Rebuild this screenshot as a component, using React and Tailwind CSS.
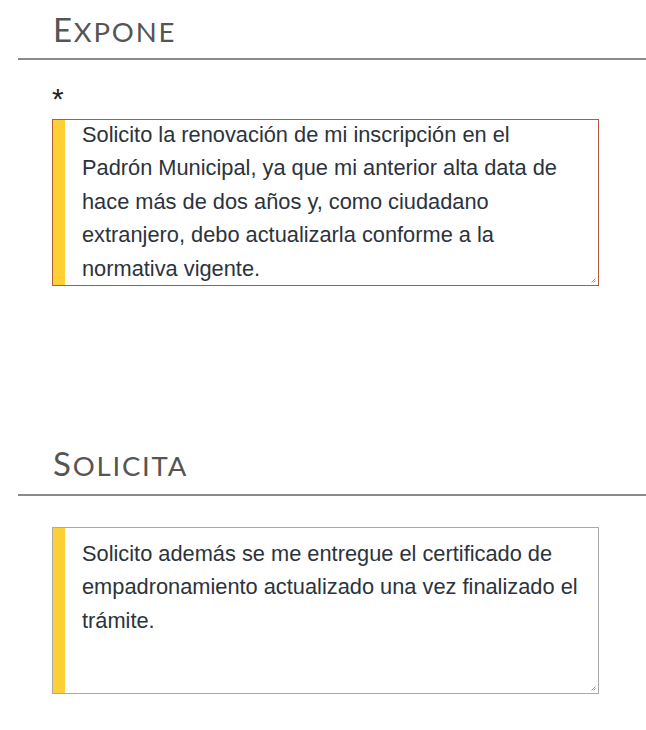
import React from "react";

function Handle() {
  return (
    <svg className="absolute right-[2px] bottom-[2px]" width="5" height="5" viewBox="0 0 5 5">
      <line x1="0.5" y1="4.5" x2="4.5" y2="0.5" stroke="#9a9a9a" strokeWidth="1" />
      <line x1="2.5" y1="4.5" x2="4.5" y2="2.5" stroke="#9a9a9a" strokeWidth="1" />
    </svg>
  );
}

function Heading({ first, rest }) {
  return (
    <h2 className="pl-[35px] font-['Lato',sans-serif] text-[#555555] leading-none tracking-[1.8px]">
      <span className="text-[33px]">{first}</span>
      <span className="text-[27.5px]">{rest}</span>
    </h2>
  );
}

export default function App() {
  return (
    <div className="min-h-[730px] bg-white pl-[18px] font-['Liberation_Sans',Arial,sans-serif]">
      <section className="pt-[13px]">
        <Heading first="E" rest="XPONE" />
        <div className="mt-[12px] h-[2px] bg-[#8a8a8a]" />
        <div className="pl-[34px]">
          <div className="mt-[24px] h-[30px] text-[30px] leading-[30px] text-[#222]">*</div>
          <div className="relative mt-[5px] h-[167px] w-[547px] overflow-hidden border border-[#b45a35] bg-white">
            <div className="absolute left-0 top-0 bottom-0 w-[12px] bg-[#fdd135]" />
            <div className="-mt-[2px] pl-[29px] pr-[17px] text-[21.8px] leading-[33.4px] text-[#2b333d]">
              Solicito la renovación de mi inscripción en el Padrón Municipal, ya que mi anterior alta data de hace más de dos años y, como ciudadano extranjero, debo actualizarla conforme a la normativa vigente.
            </div>
            <Handle />
          </div>
        </div>
      </section>
      <section className="pt-[161px]">
        <Heading first="S" rest="OLICITA" />
        <div className="mt-[14px] h-[2px] bg-[#8a8a8a]" />
        <div className="pl-[34px]">
          <div className="relative mt-[31px] h-[167px] w-[547px] overflow-hidden border border-[#a9a9a9] bg-white">
            <div className="absolute left-0 top-0 bottom-0 w-[12px] bg-[#fdd135]" />
            <div className="pt-[9px] pl-[29px] pr-[17px] text-[21.8px] leading-[33.4px] text-[#2b333d]">
              Solicito además se me entregue el certificado de empadronamiento actualizado una vez finalizado el trámite.
            </div>
            <Handle />
          </div>
        </div>
      </section>
    </div>
  );
}
